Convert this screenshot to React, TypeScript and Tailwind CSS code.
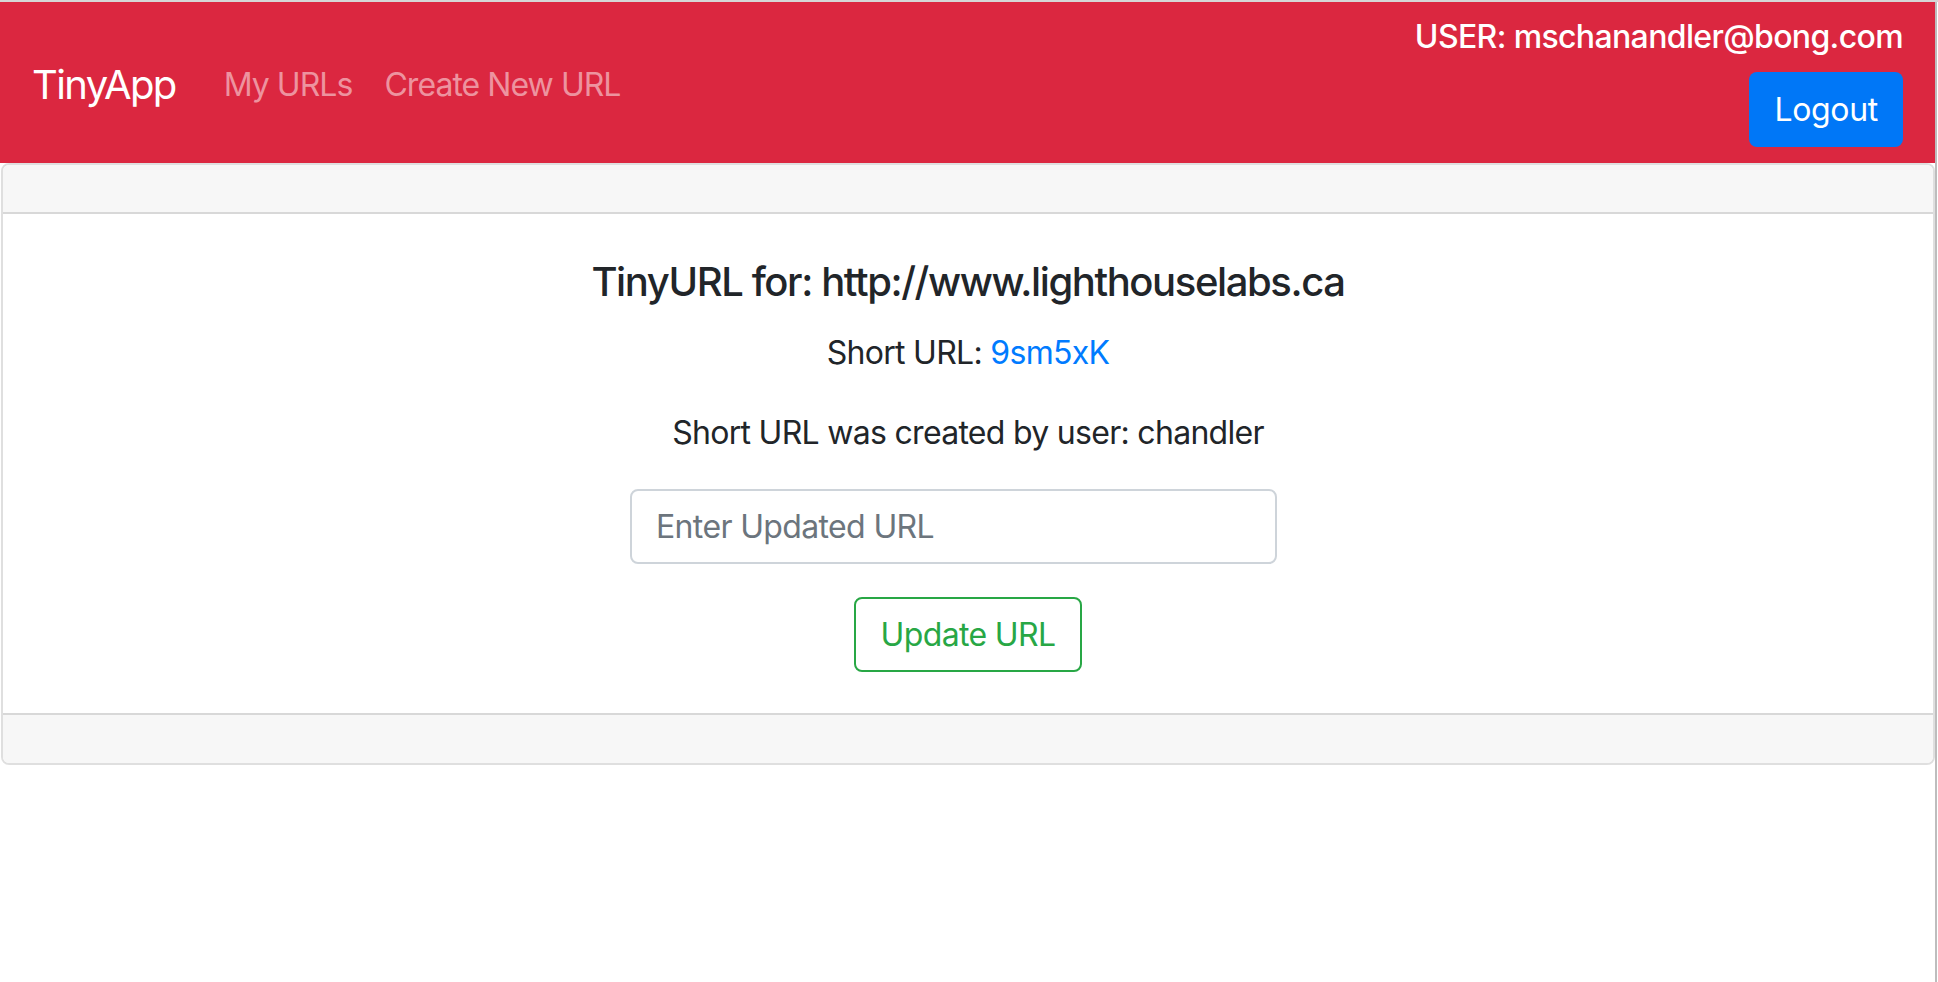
import React from 'react';

const FONT = { fontFamily: 'Inter, "Liberation Sans", Arial, sans-serif' };

function Navbar() {
    return (
        <nav className="h-[161px] bg-[#db2740] flex items-stretch justify-between pl-[32px] pr-[32px]">
            <div className="flex items-center pt-[5px]">
                <a className="text-[40px] leading-[60px] tracking-[-0.04em] text-white mr-[32px]">TinyApp</a>
                <a className="text-[32px] leading-[48px] tracking-[-0.03em] px-[16px] text-[#ed939f]">My URLs</a>
                <a className="text-[32px] leading-[48px] tracking-[-0.03em] px-[16px] text-[#ed939f]">Create New URL</a>
            </div>
            <div className="flex flex-col items-end pt-[11px]">
                <span className="text-[32px] leading-[48px] tracking-[-0.02em] font-medium text-white">USER: mschanandler@bong.com</span>
                <button className="mt-[11px] h-[75px] px-[25px] rounded-[8px] bg-[#0077f7] text-white text-[32px] leading-[48px] tracking-[-0.01em]">
                    Logout
                </button>
            </div>
        </nav>
    );
}

function UrlCard() {
    return (
        <div className="ml-[1px] border-2 border-[rgba(0,0,0,0.125)] rounded-[8px] overflow-hidden">
            <div className="h-[49px] bg-[#f7f7f7] border-b-2 border-[rgba(0,0,0,0.125)]"></div>
            <div className="p-[40px] pb-[41px] text-center text-[#212529]">
                <h5 className="mt-[4px] text-[40px] leading-[48px] font-medium tracking-[-0.035em]">TinyURL for: http://www.lighthouselabs.ca</h5>
                <p className="mt-[23px] text-[32px] leading-[48px] tracking-[-0.022em]">
                    Short URL: <a className="text-[#007bff]">9sm5xK</a>
                </p>
                <p className="mt-[32px] text-[32px] leading-[48px] tracking-[-0.022em]">Short URL was created by user: chandler</p>
                <div className="mt-[32px] flex justify-center">
                    <input
                        placeholder="Enter Updated URL"
                        className="w-[647px] h-[75px] mr-[29px] px-[24px] border-2 border-[#ced4da] rounded-[8px] text-[32px] tracking-[-0.02em] text-[#495057] placeholder:text-[#6c757d] outline-none"
                    />
                </div>
                <div className="mt-[33px] flex justify-center">
                    <button className="h-[75px] w-[228px] border-2 border-[#28a745] rounded-[8px] text-[#28a745] text-[32px] leading-[48px] tracking-[-0.02em]">
                        Update URL
                    </button>
                </div>
            </div>
            <div className="h-[50px] bg-[#f7f7f7] border-t-2 border-[rgba(0,0,0,0.125)]"></div>
        </div>
    );
}

export default function App() {
    return (
        <div className="w-[1938px] h-[982px] bg-white flex flex-col overflow-hidden" style={FONT}>
            <div className="h-[2px] bg-[#d6d6d6]"></div>
            <div className="flex flex-1">
                <div className="w-[1935px]">
                    <Navbar />
                    <UrlCard />
                </div>
                <div className="w-[3px] border-l-2 border-[#bdbdbd] bg-white"></div>
            </div>
        </div>
    );
}
